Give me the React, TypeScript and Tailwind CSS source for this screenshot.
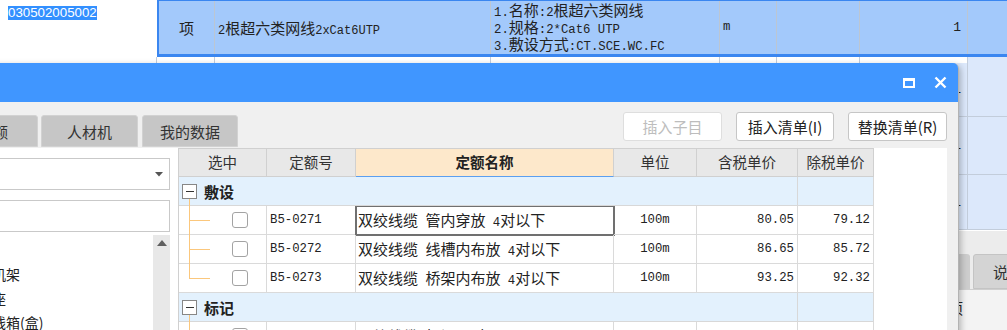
import React from "react";

const CJK_RE = /([\u2E80-\u9FFF\u3000-\u303F\uFF00-\uFFEF]+)/;
const CJK_TEST = /^[\u2E80-\u9FFF\u3000-\u303F\uFF00-\uFFEF]+$/;

function Mixed({ text, cjk, lat }: { text: string; cjk: string; lat: string }) {
  const parts = text.split(CJK_RE).filter((p) => p.length > 0);
  return (
    <span className="whitespace-pre leading-none">
      {parts.map((p, i) =>
        CJK_TEST.test(p) ? (
          <span key={i} className={cjk}>
            {p}
          </span>
        ) : (
          <span key={i} className={lat}>
            {p}
          </span>
        )
      )}
    </span>
  );
}

const C15 = "font-['Noto_Sans_CJK_SC',sans-serif] text-[15px]";
const M12 = "font-['Liberation_Mono',monospace] text-[12.3px] whitespace-pre";
const M12B = "font-['Liberation_Mono',monospace] text-[12px] whitespace-pre";

function BgRow({ h }: { h: string }) {
  return (
    <div className={`flex ${h} shrink-0 bg-[#dce8fb] border-b border-[#c3cddb]`}>
      <div className="w-[157px] shrink-0 border-r border-[#c3cddb]" />
      <div className="w-[58px] shrink-0 border-r border-[#c3cddb]" />
      <div className="w-[276px] shrink-0 border-r border-[#c3cddb]" />
      <div className="w-[229px] shrink-0 border-r border-[#c3cddb]" />
      <div className="w-[57px] shrink-0 border-r border-[#c3cddb]" />
      <div className="w-[83px] shrink-0 border-r border-[#c3cddb]" />
      <div className="flex w-[108px] shrink-0 items-center justify-end border-r border-[#c3cddb] pr-[6px] font-['Liberation_Mono',monospace] text-[13px] text-[#222]">
        1
      </div>
      <div className="flex-1" />
    </div>
  );
}

function TreeCell({ last }: { last?: boolean }) {
  return (
    <div className="relative flex w-[88px] shrink-0 items-center border-r border-b border-[#dadada] pl-[53px]">
      {last ? (
        <span className="absolute left-[10px] top-0 h-[15px] w-px bg-[#fbc77c]" />
      ) : (
        <span className="absolute left-[10px] top-0 bottom-[-1px] w-px bg-[#fbc77c]" />
      )}
      <span className="absolute left-[10px] top-[14px] h-px w-[21px] bg-[#fbc77c]" />
      <div className="h-[16px] w-[16px] rounded-[3px] border border-[#a3a3a3] bg-white" />
    </div>
  );
}

function DataRow({
  code,
  name,
  unit,
  p1,
  p2,
  last,
  selected,
}: {
  code: string;
  name: string;
  unit: string;
  p1: string;
  p2: string;
  last?: boolean;
  selected?: boolean;
}) {
  return (
    <div className="flex h-[29px] text-[#222]">
      <TreeCell last={last} />
      <div className="flex w-[89px] shrink-0 items-center border-r border-b border-[#dadada] pl-[3px]">
        <span className={M12}>{code}</span>
      </div>
      <div
        className={`flex w-[258px] shrink-0 items-center border-r border-b border-[#dadada] pl-[2px] ${
          selected ? "outline-2 outline-[#707070] -outline-offset-1" : ""
        }`}
      >
        <Mixed text={name} cjk={C15} lat={M12} />
      </div>
      <div className="flex w-[83px] shrink-0 items-center justify-center border-r border-b border-[#dadada]">
        <span className={M12}>{unit}</span>
      </div>
      <div className="flex w-[101px] shrink-0 items-center justify-end border-r border-b border-[#dadada] pr-[3px]">
        <span className={M12}>{p1}</span>
      </div>
      <div className="flex w-[76px] shrink-0 items-center justify-end border-r border-b border-[#dadada] pr-[3px]">
        <span className={M12}>{p2}</span>
      </div>
    </div>
  );
}

function GroupRow({ label }: { label: string }) {
  return (
    <div className="flex h-[29px]">
      <div className="relative flex w-[619px] shrink-0 items-center border-r border-b border-[#d8d8d8] bg-[#e3f1fd] pl-[3px]">
        <div className="flex h-[15px] w-[15px] items-center justify-center border border-[#878787] bg-white">
          <div className="h-px w-[8px] bg-[#333]" />
        </div>
        <span className="ml-[7px] font-['Noto_Sans_CJK_SC',sans-serif] text-[15px] font-bold leading-none text-[#222]">
          {label}
        </span>
        <span className="absolute left-[10px] top-[22px] bottom-[-1px] w-px bg-[#fbc77c]" />
      </div>
      <div className="w-[76px] shrink-0 border-r border-b border-[#d8d8d8] bg-[#e3f1fd]" />
    </div>
  );
}

export default function App() {
  return (
    <div className="relative h-[330px] w-[1007px] overflow-hidden bg-white font-['Noto_Sans_CJK_SC','Liberation_Sans',sans-serif] leading-none text-[#222]">
      {/* Spreadsheet in the background */}
      <div className="flex flex-col">
        <div className="flex h-[57px]">
          <div className="w-[157px] shrink-0 bg-white pl-[8px] pt-[2px]">
            <span className="inline-block bg-[#3390ff] font-['Liberation_Sans',sans-serif] text-[13.3px] leading-[14px] text-white">
              030502005002
            </span>
          </div>
          <div className="flex flex-1 border-t border-b-[3px] border-l-2 border-[#3a86f0] bg-[#a3c9fb]">
            <div className="flex w-[56px] shrink-0 items-center justify-center border-r border-[#bcc6d2]">
              <span className={C15}>项</span>
            </div>
            <div className="flex w-[276px] shrink-0 items-center border-r border-[#bcc6d2] pl-[3px]">
              <Mixed text="2根超六类网线2xCat6UTP" cjk={C15} lat={M12B} />
            </div>
            <div className="flex w-[229px] shrink-0 flex-col border-r border-[#bcc6d2] pl-[3px] pt-[1px]">
              <div className="flex h-[17px] items-center">
                <Mixed text="1.名称:2根超六类网线" cjk={C15} lat={M12} />
              </div>
              <div className="flex h-[17px] items-center">
                <Mixed text="2.规格:2*Cat6 UTP" cjk={C15} lat={M12} />
              </div>
              <div className="flex h-[17px] items-center">
                <Mixed text="3.敷设方式:CT.SCE.WC.FC" cjk={C15} lat={M12} />
              </div>
            </div>
            <div className="flex w-[57px] shrink-0 items-center border-r border-[#bcc6d2] pl-[3px]">
              <span className={M12}>m</span>
            </div>
            <div className="w-[83px] shrink-0 border-r border-[#bcc6d2]" />
            <div className="flex w-[108px] shrink-0 items-center justify-end border-r border-[#bcc6d2] pr-[6px] font-['Liberation_Mono',monospace] text-[13px]">
              1
            </div>
            <div className="flex-1" />
          </div>
        </div>
        <div className="flex h-[6px] bg-white">
          <div className="w-[157px] shrink-0 border-r border-[#c3cddb]" />
          <div className="w-[58px] shrink-0 border-r border-[#c3cddb]" />
          <div className="w-[276px] shrink-0 border-r border-[#c3cddb]" />
          <div className="w-[229px] shrink-0 border-r border-[#c3cddb]" />
          <div className="w-[57px] shrink-0 border-r border-[#c3cddb]" />
          <div className="w-[83px] shrink-0 border-r border-[#c3cddb]" />
          <div className="w-[108px] shrink-0 border-r border-[#c3cddb]" />
          <div className="flex-1 bg-[#dce8fb]" />
        </div>
        <BgRow h="h-[54px]" />
        <BgRow h="h-[58px]" />
        <BgRow h="h-[55px]" />
        <div className="flex h-[100px] flex-col border-t border-white bg-[#ececec]">
          <div className="h-[21px] shrink-0" />
          <div className="flex h-[38px] shrink-0 items-end border-b border-[#cfcfcf]">
            <div className="ml-[870px] h-[35px] w-[100px] shrink-0 rounded-t-[3px] bg-[#cdcdcd]" />
            <div className="ml-[3px] flex h-[35px] w-[90px] shrink-0 items-center rounded-t-[3px] border border-[#c4c4c4] bg-[#d4d4d4] pl-[19px] text-[15px] text-[#333]">
              说明
            </div>
          </div>
          <div className="flex-1 bg-[#f3f3f3] pl-[948px] pt-[10px] text-[15px] text-[#222]">
            项
          </div>
        </div>
      </div>

      {/* Dialog window */}
      <div className="absolute left-[-100px] top-[63px] flex h-[290px] w-[1059px] flex-col rounded-tr-[6px] border-r border-[#b3b3b3] bg-[#f0f0f0] shadow-[2px_2px_6px_rgba(0,0,0,0.25)]">
        <div className="flex h-[39px] shrink-0 items-center justify-end gap-[19px] rounded-tr-[5px] bg-[#4096ff] pr-[11px]">
          <div className="h-[10px] w-[12px] border-2 border-t-[3px] border-white" />
          <svg width="13" height="13" viewBox="0 0 13 13">
            <path d="M1.5 1.5 L11.5 11.5 M11.5 1.5 L1.5 11.5" stroke="white" strokeWidth="2.4" fill="none" />
          </svg>
        </div>

        <div className="flex h-[46px] shrink-0 justify-between">
          <div className="flex items-end pb-[1px]">
            <div className="ml-[41px] flex h-[32px] w-[97px] shrink-0 items-center rounded-t-[3px] border border-[#d2d2d2] bg-[#c6c6c6] pl-[36px] text-[15px] text-[#333]">
              定额
            </div>
            <div className="ml-[3px] flex h-[32px] w-[97px] shrink-0 items-center justify-center rounded-t-[3px] border border-[#d2d2d2] bg-[#c6c6c6] text-[15px] text-[#333]">
              人材机
            </div>
            <div className="ml-[4px] flex h-[32px] w-[96px] shrink-0 items-center justify-center rounded-t-[3px] border border-[#d2d2d2] bg-[#c6c6c6] text-[15px] text-[#333]">
              我的数据
            </div>
          </div>
          <div className="flex gap-[14px] pr-[11px] pt-[10px]">
            <div className="flex h-[29px] w-[99px] items-center justify-center rounded-[3px] border border-[#dedede] bg-white text-[15px] text-[#bdbdbd]">
              插入子目
            </div>
            <div className="flex h-[29px] w-[98px] items-center justify-center rounded-[3px] border border-[#c6c6c6] bg-white text-[15px] text-[#222]">
              插入清单(I)
            </div>
            <div className="flex h-[29px] w-[99px] items-center justify-center rounded-[3px] border border-[#c6c6c6] bg-white text-[15px] text-[#222]">
              替换清单(R)
            </div>
          </div>
        </div>

        <div className="flex flex-1">
          {/* left panel */}
          <div className="flex w-[278px] shrink-0 flex-col bg-white pr-[8px]">
            <div className="ml-[10px] mt-[10px] flex h-[32px] items-center justify-end border border-[#c9c9c9] bg-white pr-[6px]">
              <svg width="8" height="5" viewBox="0 0 8 5">
                <path d="M0 0 L8 0 L4 4.5 Z" fill="#555" />
              </svg>
            </div>
            <div className="ml-[10px] mt-[10px] h-[32px] border border-[#c9c9c9] bg-white" />
            <div className="mt-[3px] flex flex-1">
              <div className="flex flex-1 flex-col pt-[3px] text-[14px] text-[#222]">
                <div className="flex h-[24px] items-center pl-[20px] whitespace-nowrap">综合布线</div>
                <div className="flex h-[24px] items-center pl-[50px] whitespace-nowrap">机柜、机架</div>
                <div className="flex h-[24px] items-center pl-[50px] whitespace-nowrap">抗震底座</div>
                <div className="flex h-[24px] items-center pl-[50px] whitespace-nowrap">分线接线箱(盒)</div>
              </div>
              <div className="flex w-[17px] shrink-0 flex-col items-center bg-[#e8e8e8] pt-[5px]">
                <svg width="10" height="6" viewBox="0 0 10 6">
                  <path d="M0 6 L10 6 L5 0 Z" fill="#606060" />
                </svg>
              </div>
            </div>
          </div>

          {/* grid */}
          <div className="w-[769px] shrink-0 border-l border-[#d0d0d0] bg-white">
            <div className="flex h-[29px] text-[14.5px] text-[#333]">
              <div className="flex w-[88px] shrink-0 items-center justify-center border-t border-r border-b border-[#d0d0d0] bg-[#e8e8e8]">
                选中
              </div>
              <div className="flex w-[89px] shrink-0 items-center justify-center border-t border-r border-b border-[#d0d0d0] bg-[#e8e8e8]">
                定额号
              </div>
              <div className="flex w-[258px] shrink-0 items-center justify-center border-t border-r border-b border-[#d0d0d0] border-b-[#5b9ff0] bg-[#fde8cb] font-bold text-[#222]">
                定额名称
              </div>
              <div className="flex w-[83px] shrink-0 items-center justify-center border-t border-r border-b border-[#d0d0d0] bg-[#e8e8e8]">
                单位
              </div>
              <div className="flex w-[101px] shrink-0 items-center justify-center border-t border-r border-b border-[#d0d0d0] bg-[#e8e8e8]">
                含税单价
              </div>
              <div className="flex w-[76px] shrink-0 items-center justify-center border-t border-r border-b border-[#d0d0d0] bg-[#e8e8e8]">
                除税单价
              </div>
            </div>
            <GroupRow label="敷设" />
            <DataRow code="B5-0271" name="双绞线缆 管内穿放 4对以下" unit="100m" p1="80.05" p2="79.12" selected />
            <DataRow code="B5-0272" name="双绞线缆 线槽内布放 4对以下" unit="100m" p1="86.65" p2="85.72" />
            <DataRow code="B5-0273" name="双绞线缆 桥架内布放 4对以下" unit="100m" p1="93.25" p2="92.32" last />
            <GroupRow label="标记" />
            <DataRow code="B5-0274" name="双绞线缆 标记 4对以下" unit="100m" p1="12.30" p2="11.95" />
          </div>
        </div>
      </div>
    </div>
  );
}
